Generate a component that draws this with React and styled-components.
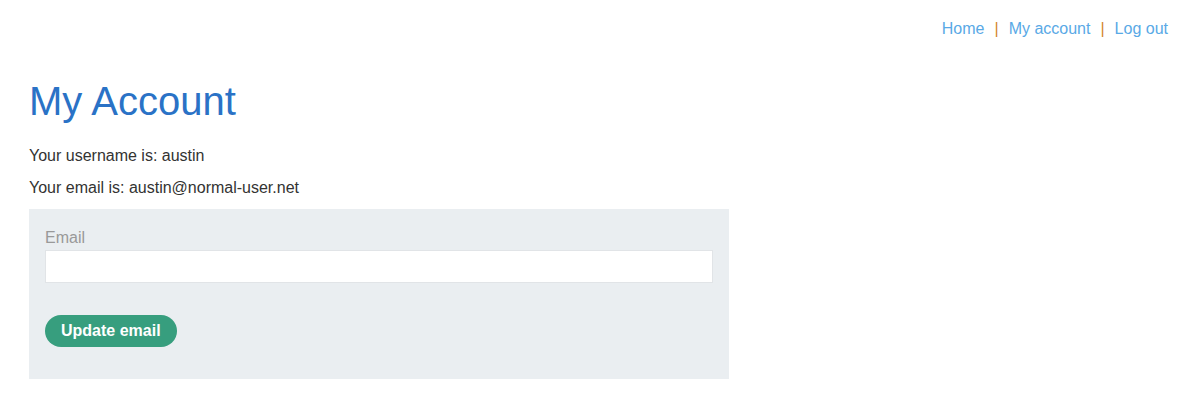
import React from "react";
import styled, { createGlobalStyle } from "styled-components";

const Global = createGlobalStyle`
  html, body { margin: 0; padding: 0; background: #fff; }
  body {
    font-family: "Liberation Sans", Arial, sans-serif;
    font-size: 16px;
    color: #333332;
  }
  * { box-sizing: border-box; }
`;

const Header = styled.header`
  display: flex;
  justify-content: flex-end;
  padding: 19px 22px 0 0;
`;

const Nav = styled.nav`
  display: flex;
  align-items: center;
  gap: 10px;
  font-size: 16px;
  line-height: 19px;
`;

const NavLink = styled.a`
  color: #59a9e6;
  text-decoration: none;
`;

const Sep = styled.span`
  color: #d4852a;
`;

const Main = styled.main`
  padding: 0 29px;
`;

const Title = styled.h1`
  margin: 40px 0 0 0;
  font-size: 40px;
  font-weight: 400;
  line-height: 46px;
  color: #2a72c6;
`;

const Info = styled.p`
  margin: ${(p) => p.$top}px 0 0 0;
  line-height: 19px;
  font-size: 16px;
`;

const Form = styled.form`
  margin-top: 12px;
  width: 700px;
  background: #eaeef1;
  padding: 19px 16px 32px 16px;
  display: flex;
  flex-direction: column;
`;

const Label = styled.label`
  color: #999999;
  font-size: 16px;
  line-height: 19px;
`;

const Input = styled.input`
  margin-top: 3px;
  height: 33px;
  width: 100%;
  border: 1px solid #e1e4e7;
  background: #fff;
  outline: none;
  font-family: inherit;
  font-size: 16px;
  padding: 0 8px;
`;

const Button = styled.button`
  margin-top: 32px;
  align-self: flex-start;
  height: 32px;
  padding: 0 16px;
  border: none;
  border-radius: 20px;
  background: #379e7e;
  color: #fff;
  font-family: inherit;
  font-weight: 700;
  font-size: 16px;
  cursor: pointer;
`;

export default function App() {
  return (
    <>
      <Global />
      <Header>
        <Nav>
          <NavLink href="#">Home</NavLink>
          <Sep>|</Sep>
          <NavLink href="#">My account</NavLink>
          <Sep>|</Sep>
          <NavLink href="#">Log out</NavLink>
        </Nav>
      </Header>
      <Main>
        <Title>My Account</Title>
        <Info $top={22}>Your username is: austin</Info>
        <Info $top={13}>Your email is: austin@normal-user.net</Info>
        <Form onSubmit={(e) => e.preventDefault()}>
          <Label htmlFor="email">Email</Label>
          <Input id="email" type="email" name="email" />
          <Button type="submit">Update email</Button>
        </Form>
      </Main>
    </>
  );
}
